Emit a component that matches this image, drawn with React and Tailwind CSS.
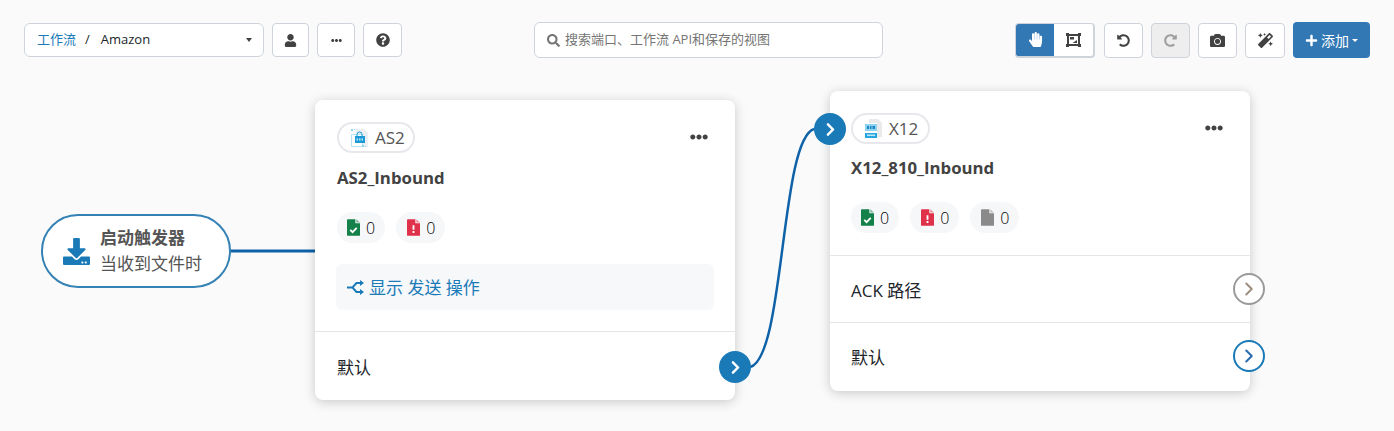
import { FaUser, FaEllipsisH, FaQuestionCircle, FaSearch, FaHandPaper, FaUndoAlt, FaRedoAlt, FaCamera, FaMagic, FaPlus, FaDownload, FaChevronRight } from 'react-icons/fa';
import { ChevronRight } from 'lucide-react';

function ToolButton({ children, className = '' }) {
  return (
    <button className={`h-[35px] rounded border border-[#ced4da] bg-white flex items-center justify-center text-[#424242] ${className}`}>
      {children}
    </button>
  );
}

function FileBadge({ kind, count }) {
  const fill = { ok: '#14804a', err: '#e0314b', none: '#8a8a8a' }[kind];
  return (
    <div className={`h-[31px] rounded-full bg-[#f6f7f9] pr-[10px] flex items-center gap-[6px] ${kind === 'ok' ? 'pl-[10px]' : 'pl-[11px]'}`}>
      <svg width="13" height="17" viewBox="0 0 14 18">
        <path d="M1 0h8v4.500h5V17a1 1 0 0 1-1 1H1a1 1 0 0 1-1-1V1a1 1 0 0 1 1-1z" fill={fill} />
        <path d="M10 0l4 3.500h-4z" fill={fill} opacity="0.55" />
        {kind === 'ok' && <path d="M3.500 11.500l2.500 2.500 4.500-4.500" stroke="#fff" strokeWidth="2" fill="none" />}
        {kind === 'err' && <path d="M6 6.500h2v5H6zM6 12.800h2v2H6z" fill="#fff" />}
      </svg>
      <span className="text-[16px] leading-none font-light text-black">{count}</span>
    </div>
  );
}

function As2Icon() {
  return (
    <svg width="18" height="20" viewBox="0 0 18 20">
      <path d="M6 1h8l4 4v14H6z" fill="#eceff2" />
      <path d="M1.500 6.500h11v12h-11z" fill="#fff" stroke="#b5e2f6" />
      <path d="M7 8V6.500a2.500 2.500 0 0 1 5 0V8" stroke="#1a9ad6" fill="none" />
      <rect x="5" y="8" width="10" height="7" fill="#1a9ad6" />
      <path d="M6.500 10.500h1.500v2H6.500zM9 10.500h1.500v2H9zM11.500 10.500H13v2h-1.500z" fill="#bfe6f7" />
      <path d="M1 1h2v2H1zM4 1h1v1H4zM12 17h2v2h-2zM15 18h1v1h-1z" fill="#8fd3f1" />
    </svg>
  );
}

function X12Icon() {
  return (
    <svg width="18" height="20" viewBox="0 0 18 20">
      <path d="M5 0h9l4 4v14H5z" fill="#e8eaec" />
      <rect x="1" y="4" width="12" height="15" fill="#fff" />
      <rect x="1" y="5" width="12" height="7" fill="#8fd3f1" />
      <path d="M3 7h2v3H3zM6 7h1.500v3H6zM8.500 7H11v3H8.500z" fill="#1a86c4" />
      <rect x="1" y="14" width="12" height="5" fill="#29a7e1" />
      <path d="M3 15.500h8v1.500H3z" fill="#bfe6f7" />
    </svg>
  );
}

function TypePill({ label, className = '', children }) {
  return (
    <div className={`h-[31px] w-fit rounded-full border-2 border-[#e6e8ec] pl-[11px] flex items-center gap-[7px] text-[17px] text-[#555] ${className}`}>
      {children}
      {label}
    </div>
  );
}

function Port({ outline, grey, className }) {
  if (outline) {
    const tone = grey ? 'border-[#9a9a9a] text-[#a08f80]' : 'border-[#1a7ab8] text-[#2a6cb0]';
    return (
      <div className={`absolute w-[32px] h-[32px] rounded-full flex items-center justify-center bg-white border-2 ${tone} ${className}`}>
        <ChevronRight size={22} strokeWidth={2.2} />
      </div>
    );
  }
  return (
    <div className={`absolute w-[32px] h-[32px] rounded-full flex items-center justify-center bg-[#1a7ab8] text-white ${className}`}>
      <FaChevronRight size={15} />
    </div>
  );
}

function NodeRow({ label, children, className = '' }) {
  return (
    <div className={`relative flex items-center text-[17px] text-[#212529] border-t border-[#e5e5e5] ${className}`}>
      {label}
      {children}
    </div>
  );
}

export default function App() {
  return (
    <div
      className="relative w-[1394px] h-[431px] overflow-hidden bg-[#fafafa] text-[14px]"
      style={{ fontFamily: '"Open Sans", "Noto Sans CJK SC", sans-serif' }}
    >
      {/* Toolbar */}
      <div className="flex items-center pl-[24px] pr-[24px] pt-[22px]">
        <div className="flex items-center gap-[8px] w-[378px]">
          <div className="w-[240px] h-[34px] rounded-[6px] border border-[#ced4da] bg-white flex items-center pl-[12px] pr-[11px] text-[13px] text-[#212529]">
            <span className="text-[#1a7ab8]">工作流</span>
            <span className="ml-[9px]">/</span>
            <span className="ml-[11px]">Amazon</span>
            <span className="ml-auto w-0 h-0 border-x-[3.500px] border-x-transparent border-t-[4px] border-t-[#424242]" />
          </div>
          <ToolButton className="w-[37px] !h-[34px]"><FaUser size={13} /></ToolButton>
          <ToolButton className="w-[38px] !h-[34px]"><FaEllipsisH size={11} /></ToolButton>
          <ToolButton className="w-[39px] !h-[34px]"><FaQuestionCircle size={14} /></ToolButton>
        </div>

        <div className="ml-[132px] w-[349px] h-[36px] rounded-[6px] border border-[#ced4da] bg-white flex items-center gap-[5px] pl-[12px] text-[13px] text-[#757575]">
          <FaSearch size={13} />
          <span>搜索端口、工作流 API和保存的视图</span>
        </div>

        <div className="ml-auto flex items-center gap-[8px]">
          <div className="flex h-[35px] rounded border border-[#ced4da] border-r-2 border-b-2 overflow-hidden bg-white mr-[1px]">
            <div className="w-[38px] bg-[#3178b5] flex items-center justify-center text-white"><FaHandPaper size={15} /></div>
            <div className="w-[39px] flex items-center justify-center text-[#424242]">
              <svg width="15" height="14" viewBox="0 0 15 14">
                <path d="M0 0h3v1h9V0h3v3h-1v8h1v3h-3v-1H3v1H0v-3h1V3H0zM3 3v8h9V3z" fill="currentColor" />
                <path d="M4 4h4v2.500H4zM11 7v3H6.500z" fill="currentColor" />
              </svg>
            </div>
          </div>
          <ToolButton className="w-[39px]"><FaUndoAlt size={13} /></ToolButton>
          <ToolButton className="w-[39px] !bg-[#eeeeee] !text-[#9e9e9e]"><FaRedoAlt size={13} /></ToolButton>
          <ToolButton className="w-[39px]"><FaCamera size={15} /></ToolButton>
          <ToolButton className="w-[40px]"><FaMagic size={15} /></ToolButton>
          <button className="w-[77px] h-[36px] rounded bg-[#3178b5] text-white text-[14px] flex items-center justify-center gap-[3px]">
            <FaPlus size={13} />
            <span>添加</span>
            <span className="w-0 h-0 border-x-[3px] border-x-transparent border-t-[3.500px] border-t-white" />
          </button>
        </div>
      </div>

      {/* Connectors */}
      <svg className="absolute inset-0" width="1394" height="431" fill="none">
        <path d="M230 251H316" stroke="#0f62a8" strokeWidth="3" />
        <path d="M750 367C785 358 780 140 814 129" stroke="#0f62a8" strokeWidth="2.500" />
      </svg>

      {/* Start trigger */}
      <div className="absolute left-[41px] top-[214px] w-[190px] h-[74px] rounded-full border-2 border-[#3482b5] bg-white flex items-center pl-[20px] gap-[10px]">
        <FaDownload size={27} className="text-[#1a7ab8]" />
        <div className="text-[#555] text-[17px]">
          <div className="font-bold leading-[26px] -mt-[1px]">启动触发器</div>
          <div className="leading-[26px]">当收到文件时</div>
        </div>
      </div>

      {/* AS2 node */}
      <div className="absolute left-[315px] top-[100px] w-[420px] h-[300px] rounded-[8px] bg-white shadow-[0_2px_12px_rgba(0,0,0,0.2)] flex flex-col">
        <div className="pl-[22px] pr-[21px] pt-[22px]">
          <div className="flex items-center justify-between">
            <TypePill label="AS2" className="pr-[8px]"><As2Icon /></TypePill>
            <FaEllipsisH size={18} className="text-[#424242] mr-[6px] -mt-[1px]" />
          </div>
          <div className="mt-[13px] text-[16.800px] font-bold leading-[24px] text-[#424242]">AS2_Inbound</div>
          <div className="mt-[22px] flex gap-[11px]">
            <FileBadge kind="ok" count={0} />
            <FileBadge kind="err" count={0} />
          </div>
          <div className="mt-[21px] -ml-[1px] h-[46px] pt-[1px] rounded-[6px] bg-[#f6f8fa] flex items-center gap-[5px] pl-[11px] text-[17px] text-[#1a7ab8]">
            <svg width="17" height="15" viewBox="0 0 17 15" fill="currentColor">
              <path d="M0 6.500h5l4-4.500h4V0l4 3-4 3V4h-3L6.800 7.500 10 11h3V9l4 3-4 3v-2H9L5 8.500H0z" />
            </svg>
            显示 发送 操作
          </div>
        </div>
        <NodeRow label="默认" className="mt-[21px] flex-1 px-[22px] pt-[4px]">
          <Port className="right-[-16px] top-[19px]" />
        </NodeRow>
      </div>

      {/* X12 node */}
      <div className="absolute left-[830px] top-[91px] w-[420px] h-[300px] rounded-[8px] bg-white shadow-[0_2px_12px_rgba(0,0,0,0.2)] flex flex-col">
        <Port className="left-[-16px] top-[22px]" />
        <div className="px-[21px] pt-[22px]">
          <div className="flex items-center justify-between">
            <TypePill label="X12" className="pr-[10px]"><X12Icon /></TypePill>
            <FaEllipsisH size={18} className="text-[#424242] mr-[6px] -mt-[1px]" />
          </div>
          <div className="mt-[12px] text-[16.800px] font-bold leading-[24px] text-[#424242]">X12_810_Inbound</div>
          <div className="mt-[22px] flex gap-[11px]">
            <FileBadge kind="ok" count={0} />
            <FileBadge kind="err" count={0} />
            <FileBadge kind="none" count={0} />
          </div>
        </div>
        <NodeRow label="ACK 路径" className="mt-[22px] h-[67px] px-[21px] pt-[3px]">
          <Port outline grey className="right-[-15px] top-[17px]" />
        </NodeRow>
        <NodeRow label="默认" className="flex-1 px-[21px] pt-[2px]">
          <Port outline className="right-[-15px] top-[17px]" />
        </NodeRow>
      </div>
    </div>
  );
}
